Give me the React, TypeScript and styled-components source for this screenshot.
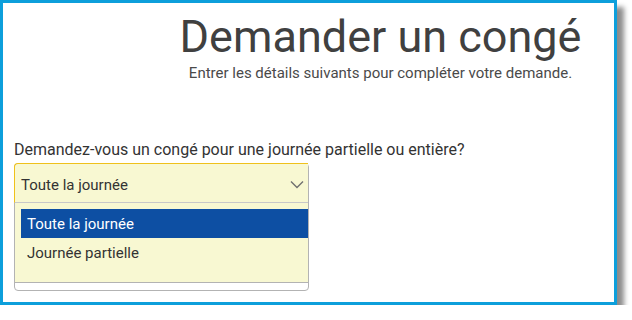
// Libraries
import styled, { createGlobalStyle } from 'styled-components';


// Styled Components
const GlobalStyle = createGlobalStyle`
html, body {
  margin: 0;
  padding: 0;
  background: #ffffff;
}

body {
  font-family: Roboto, "Liberation Sans", sans-serif;
  color: #333333;
}
`

const Frame = styled.div`
box-sizing: border-box;
width: 617px;
height: 305px;
border: 3px solid #0d9fdb;
background: #ffffff;
box-shadow: 7px 7px 5px rgba(0, 0, 0, 0.45);

display: flex;
flex-direction: column;
`

const Header = styled.header`
padding: 10px 0 0 144px;

display: flex;
flex-direction: column;
align-items: center;
`

const Title = styled.h1`
margin: 0;
font-size: 45px;
font-weight: 400;
line-height: 48px;
color: #404040;
`

const Subtitle = styled.p`
margin: 3px 0 0;
font-size: 15px;
line-height: 18px;
color: #4a4a4a;
`

const Form = styled.form`
padding: 59px 0 0 11px;
`

const Label = styled.label`
display: block;
font-size: 16px;
line-height: 18px;
color: #333333;
margin-bottom: 4px;
`

const Field = styled.div`
box-sizing: border-box;
width: 295px;
border: 1px solid #b3b3b3;
border-radius: 4px;
padding-bottom: 7px;
background: #ffffff;
`

const SelectControl = styled.div`
box-sizing: border-box;
height: 40px;
padding: 3px 4px 0 6px;
background: #f8f8d2;
border-top: 1px solid #efc11b;
border-left: 1px solid #efc11b;
margin: -1px 0 0 -1px;
border-top-left-radius: 4px;
border-bottom: 1px solid #c8c8c8;

display: flex;
align-items: center;
justify-content: space-between;

font-size: 15px;
color: #333333;
`

const Listbox = styled.ul`
list-style: none;
margin: 0;
padding: 6px 0 15px 6px;
background: #f8f8d2;
border-bottom: 1px solid #b3b3b3;
`

const Option = styled.li<{ $selected?: boolean }>`
height: 29px;
padding-left: 6px;

display: flex;
align-items: center;

font-size: 15px;
color: ${p => (p.$selected ? '#ffffff' : '#333333')};
background: ${p => (p.$selected ? '#0d4fa3' : 'transparent')};
`

function Chevron(): JSX.Element {
  return (
    <svg width="14" height="9" viewBox="0 0 14 9">
      <path d="M1 1.5 L7 7.5 L13 1.5" fill="none" stroke="#707070" strokeWidth="1.4" />
    </svg>
  );
}

function App(): JSX.Element {
  return (
    <>
      <GlobalStyle />
      <Frame>
        <Header>
          <Title>Demander un congé</Title>
          <Subtitle>Entrer les détails suivants pour compléter votre demande.</Subtitle>
        </Header>
        <Form>
          <Label>Demandez-vous un congé pour une journée partielle ou entière?</Label>
          <Field>
            <SelectControl>
              <span>Toute la journée</span>
              <Chevron />
            </SelectControl>
            <Listbox>
              <Option $selected>Toute la journée</Option>
              <Option>Journée partielle</Option>
            </Listbox>
          </Field>
        </Form>
      </Frame>
    </>
  );
};

export default App;
